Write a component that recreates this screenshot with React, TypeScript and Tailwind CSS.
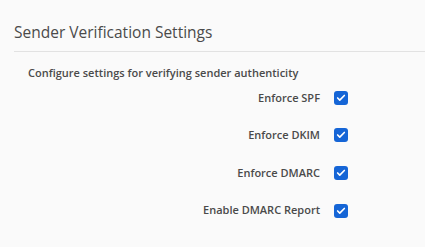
import { Check } from "lucide-react"

const options = ["Enforce SPF", "Enforce DKIM", "Enforce DMARC", "Enable DMARC Report"]

function Checkbox() {
  return (
    <span className="flex h-[14px] w-[14px] items-center justify-center rounded-[3px] bg-[#1565d6]">
      <Check className="h-[10px] w-[10px] text-white" strokeWidth={4} />
    </span>
  )
}

export default function App() {
  return (
    <div className="h-[247px] w-[425px] bg-[#fafafa] text-[#4a4a4a]" style={{ fontFamily: "'Open Sans', sans-serif" }}>
      <div className="pl-[14px] pt-[22px]">
        <h2 className="pb-[9px] text-[15.5px] leading-[20px]">Sender Verification Settings</h2>
        <div className="h-px bg-[#e2e2e2]" />
      </div>
      <div className="px-[28px] pt-[13px]">
        <p className="text-[11px] font-semibold leading-[16px]">Configure settings for verifying sender authenticity</p>
        <div className="mt-[-2px] flex flex-col">
          {options.map((o) => (
            <label key={o} className="flex h-[37.6px] items-center justify-end gap-[14px] pr-[49px]">
              <span className="text-[11px] font-semibold">{o}</span>
              <Checkbox />
            </label>
          ))}
        </div>
      </div>
    </div>
  )
}
